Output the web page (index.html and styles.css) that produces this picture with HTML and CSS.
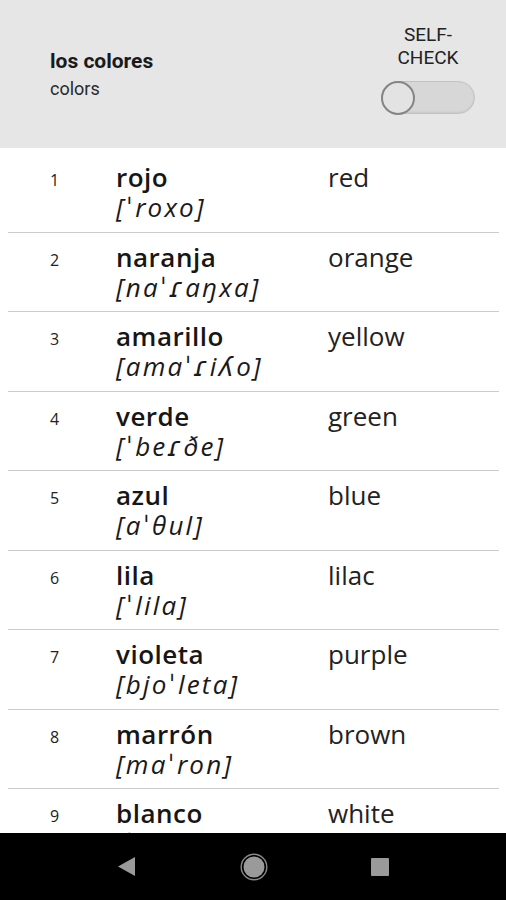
FILE: index.html
```html
<!DOCTYPE html>
<html lang="es">
<head>
<meta charset="utf-8">
<title>los colores</title>
<link rel="stylesheet" href="styles.css">
</head>
<body>
<div class="screen">
  <header class="topbar">
    <div class="titles">
      <div class="title">los colores</div>
      <div class="subtitle">colors</div>
    </div>
    <div class="selfcheck">
      <div class="sc-label">SELF-<br>CHECK</div>
      <div class="switch"><div class="thumb"></div></div>
    </div>
  </header>
  <main class="list">
    <div class="row"><div class="num">1</div><div class="es"><div class="word">rojo</div><div class="ipa">[ˈroxo]</div></div><div class="en">red</div></div>
    <div class="row"><div class="num">2</div><div class="es"><div class="word">naranja</div><div class="ipa">[naˈɾaŋxa]</div></div><div class="en">orange</div></div>
    <div class="row"><div class="num">3</div><div class="es"><div class="word">amarillo</div><div class="ipa">[amaˈɾiʎo]</div></div><div class="en">yellow</div></div>
    <div class="row"><div class="num">4</div><div class="es"><div class="word">verde</div><div class="ipa">[ˈbeɾðe]</div></div><div class="en">green</div></div>
    <div class="row"><div class="num">5</div><div class="es"><div class="word">azul</div><div class="ipa">[aˈθul]</div></div><div class="en">blue</div></div>
    <div class="row"><div class="num">6</div><div class="es"><div class="word">lila</div><div class="ipa">[ˈlila]</div></div><div class="en">lilac</div></div>
    <div class="row"><div class="num">7</div><div class="es"><div class="word">violeta</div><div class="ipa">[bjoˈleta]</div></div><div class="en">purple</div></div>
    <div class="row"><div class="num">8</div><div class="es"><div class="word">marrón</div><div class="ipa">[maˈron]</div></div><div class="en">brown</div></div>
    <div class="row"><div class="num">9</div><div class="es"><div class="word">blanco</div><div class="ipa">[ˈblaŋko]</div></div><div class="en">white</div></div>
  </main>
  <nav class="navbar">
    <svg class="nav-back" width="18" height="19" viewBox="0 0 18 19"><polygon points="17,0 17,19 0,9.5" fill="#9a9a9a"/></svg>
    <svg class="nav-home" width="28" height="28" viewBox="0 0 28 28"><circle cx="14" cy="14" r="12.8" fill="none" stroke="#8a8a8a" stroke-width="1.4"/><circle cx="14" cy="14" r="10.5" fill="#9a9a9a"/></svg>
    <svg class="nav-recent" width="18" height="18" viewBox="0 0 18 18"><rect x="0" y="0" width="18" height="18" rx="1" fill="#9a9a9a"/></svg>
  </nav>
</div>
</body>
</html>
```
FILE: styles.css
```css
html, body {
  margin: 0;
  padding: 0;
  background: #ffffff;
}

.screen {
  width: 506px;
  height: 900px;
  display: flex;
  flex-direction: column;
  overflow: hidden;
}

.topbar {
  height: 148px;
  flex: none;
  background: #e6e6e6;
  display: flex;
  justify-content: space-between;
  box-sizing: border-box;
  padding: 0 30px 0 50px;
}

.titles {
  font-family: Roboto, "Noto Sans", sans-serif;
  padding-top: 47px;
}

.title {
  font-size: 21px;
  font-weight: 700;
  color: #1a1a1a;
  line-height: 28px;
}

.subtitle {
  font-size: 18px;
  color: #2a2a2a;
  line-height: 24px;
  margin-top: 2px;
}

.selfcheck {
  display: flex;
  flex-direction: column;
  align-items: center;
  padding-top: 23px;
  width: 96px;
}

.sc-label {
  font-family: Roboto, "Noto Sans", sans-serif;
  font-size: 19px;
  line-height: 23px;
  color: #222;
  text-align: center;
}

.switch {
  margin-top: 12px;
  width: 94px;
  height: 33px;
  box-sizing: border-box;
  border-radius: 17px;
  background: #d7d7d7;
  border: 1px solid #c2c2c2;
  box-shadow: inset 0 -1px 2px rgba(0,0,0,0.08);
  display: flex;
  align-items: center;
}

.thumb {
  width: 34px;
  height: 34px;
  box-sizing: border-box;
  border-radius: 50%;
  background: #e3e3e3;
  border: 2px solid #858585;
  margin-left: -1px;
}

.list {
  flex: 1;
  overflow: hidden;
  padding: 5px 7px 0 8px;
}

.row {
  display: grid;
  grid-template-columns: 66px 212px 1fr;
  height: 79.5px;
  box-sizing: border-box;
  padding: 8px 0 0 42px;
  border-bottom: 1.5px solid #cccccc;
  font-family: "Open Sans", "DejaVu Sans", sans-serif;
}

.num {
  font-size: 16px;
  color: #222;
  line-height: 32px;
  padding-top: 3px;
}

.word {
  font-size: 26px;
  font-weight: 600;
  letter-spacing: 0.5px;
  color: #161616;
  line-height: 32px;
}

.ipa {
  font-size: 26px;
  font-style: italic;
  letter-spacing: 2.2px;
  color: #1a1a1a;
  line-height: 28px;
}

.en {
  font-size: 26px;
  color: #222;
  line-height: 32px;
}

.navbar {
  height: 67px;
  flex: none;
  background: #000;
  display: flex;
  align-items: center;
  justify-content: space-between;
  padding: 0 117px 0 118px;
}

.nav-back {
  display: block;
}

.nav-home {
  display: block;
}

.nav-recent {
  display: block;
}
```
